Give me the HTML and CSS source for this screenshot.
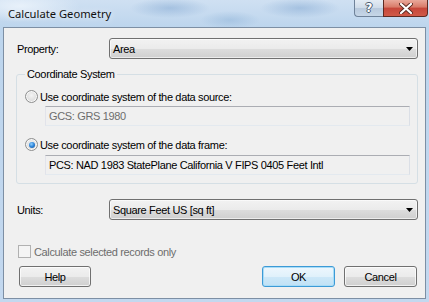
FILE: index.html
```html
<!DOCTYPE html>
<html>
<head>
<meta charset="utf-8">
<link rel="stylesheet" href="styles.css">
</head>
<body>
<div class="window">
  <div class="titlebar">
    <span class="title">Calculate Geometry</span>
    <div class="caption-btns">
      <div class="cap-help">?</div>
      <div class="cap-close">
        <svg width="14" height="11" viewBox="0 0 14 11">
          <path d="M2 1 L12 10 M12 1 L2 10" stroke="#5a2a22" stroke-width="4" stroke-linecap="round"/>
          <path d="M2 1 L12 10 M12 1 L2 10" stroke="#ffffff" stroke-width="2.2" stroke-linecap="round"/>
        </svg>
      </div>
    </div>
  </div>
  <div class="client">
    <div class="row">
      <span class="label">Property:</span>
      <div class="combo"><span class="combo-text">Area</span><svg class="arrow" width="7" height="4" viewBox="0 0 7 4"><path d="M0 0 H7 L3.5 4 Z" fill="#000"/></svg></div>
    </div>
    <fieldset class="group">
      <legend>Coordinate System</legend>
      <div class="opt"><span class="radio"></span><span>Use coordinate system of the data source:</span></div>
      <div class="textbox disabled">GCS: GRS 1980</div>
      <div class="opt opt2"><span class="radio checked"><span class="dot"></span></span><span>Use coordinate system of the data frame:</span></div>
      <div class="textbox tb2">PCS: NAD 1983 StatePlane California V FIPS 0405 Feet Intl</div>
    </fieldset>
    <div class="row units">
      <span class="label">Units:</span>
      <div class="combo"><span class="combo-text">Square Feet US [sq ft]</span><svg class="arrow" width="7" height="4" viewBox="0 0 7 4"><path d="M0 0 H7 L3.5 4 Z" fill="#000"/></svg></div>
    </div>
    <div class="check-row"><span class="checkbox"></span><span class="check-label">Calculate selected records only</span></div>
    <div class="buttons">
      <div class="btn help">Help</div>
      <div class="btn default">OK</div>
      <div class="btn">Cancel</div>
    </div>
  </div>
</div>
</body>
</html>
```
FILE: styles.css
```css
html, body {
  margin: 0;
  padding: 0;
}
body {
  font-family: "Liberation Sans", Arial, sans-serif;
  font-size: 11px;
  letter-spacing: -0.35px;
  color: #000;
  background: #c3d8ee;
}
.window {
  width: 429px;
  height: 302px;
  box-sizing: border-box;
  padding: 0 3px 3px 3px;
  display: flex;
  flex-direction: column;
  overflow: hidden;
  background:
    radial-gradient(ellipse 40px 10px at 170px 8px, rgba(120,160,205,0.45), transparent),
    radial-gradient(ellipse 40px 10px at 300px 8px, rgba(120,160,205,0.45), transparent),
    radial-gradient(ellipse 30px 9px at 230px 20px, rgba(130,170,210,0.4), transparent),
    radial-gradient(ellipse 60px 16px at 20px 6px, rgba(235,243,251,0.9), transparent),
    linear-gradient(to bottom, #cfe0f2 0px, #bdd5ed 27px, #c3d8ef 100%);
}
.titlebar {
  height: 27px;
  display: flex;
  align-items: flex-start;
}
.title {
  margin-left: 5px;
  line-height: 27px;
  font-family: "Noto Sans", "Open Sans", sans-serif;
  font-size: 11.2px;
  letter-spacing: 0;
  color: #111;
  text-shadow: 0 0 6px rgba(255,255,255,0.9);
}
.caption-btns {
  margin-left: auto;
  margin-right: -2px;
  display: flex;
  height: 17px;
  letter-spacing: 0;
}
.cap-help {
  width: 29px;
  height: 17px;
  box-sizing: border-box;
  border: 1px solid #6f8299;
  border-top: none;
  border-right: none;
  border-bottom-left-radius: 4px;
  background: linear-gradient(to bottom, #e4ecf4 0%, #cfdbe8 50%, #b8c9dc 51%, #c6d6e7 100%);
  color: #fff;
  font-family: "DejaVu Sans", sans-serif;
  font-weight: bold;
  font-size: 12px;
  line-height: 16px;
  text-align: center;
  text-shadow: 1px 0 0 #4a5a6e, -1px 0 0 #4a5a6e, 0 1px 0 #4a5a6e, 0 -1px 0 #4a5a6e;
}
.cap-close {
  width: 45px;
  height: 17px;
  box-sizing: border-box;
  border: 1px solid #5e2a22;
  border-top: none;
  border-bottom-right-radius: 4px;
  background: linear-gradient(to bottom, #e9a99b 0%, #d87a68 45%, #c6463a 50%, #d05a48 100%);
  display: flex;
  align-items: center;
  justify-content: center;
}
.client {
  flex: 1;
  background: #f0f0f0;
  border: 1px solid #7d8fa4;
  padding: 10px 7px 11px 13px;
  display: flex;
  flex-direction: column;
}
.row {
  display: flex;
  align-items: center;
  height: 21px;
}
.label {
  width: 92px;
  flex: none;
}
.combo {
  flex: 1;
  height: 21px;
  box-sizing: border-box;
  border: 1px solid #707070;
  border-radius: 3px;
  background: linear-gradient(to bottom, #f2f2f2 0%, #ebebeb 50%, #dddddd 51%, #cfcfcf 100%);
  box-shadow: inset 0 0 0 1px rgba(255,255,255,0.6);
  display: flex;
  align-items: center;
  padding: 0 4px 0 3px;
}
.combo-text {
  flex: 1;
}
.arrow {
  flex: none;
}
.group {
  margin: 9px 0 0 -1px;
  padding: 9px 7px 8px 8px;
  border: 1px solid #d5dfe5;
  border-radius: 3px;
  min-width: 0;
}
.group legend {
  padding: 0 2px;
  line-height: 13px;
}
.opt {
  display: flex;
  align-items: center;
  height: 13px;
  gap: 2px;
}
.opt2 {
  margin-top: 12px;
}
.radio {
  width: 13px;
  height: 13px;
  box-sizing: border-box;
  border-radius: 50%;
  border: 1px solid #8e8f8f;
  background: radial-gradient(circle at 50% 40%, #f4f4f4 0%, #e0e0e0 55%, #cfcfcf 100%);
  box-shadow: inset 0 0 0 1px #f8f8f8;
  flex: none;
  display: flex;
  align-items: center;
  justify-content: center;
}
.dot {
  width: 6px;
  height: 6px;
  border-radius: 50%;
  background: radial-gradient(circle at 40% 35%, #8fd0ff 0%, #2a82d8 50%, #1a4f8f 100%);
}
.textbox {
  margin: 3px 0 0 20px;
  height: 20px;
  box-sizing: border-box;
  border-top: 1px solid #abadb3;
  border-left: 1px solid #e2e3ea;
  border-right: 1px solid #dbdfe6;
  border-bottom: 1px solid #e3e9ef;
  padding: 0 3px;
  display: flex;
  align-items: center;
  white-space: nowrap;
  overflow: hidden;
}
.tb2 {
  margin-top: 4px;
}
.disabled {
  color: #6d6d6d;
}
.units {
  margin-top: 15px;
}
.check-row {
  margin-top: 25px;
  height: 13px;
  display: flex;
  align-items: center;
  gap: 3px;
  padding-left: 1px;
}
.checkbox {
  width: 13px;
  height: 13px;
  box-sizing: border-box;
  border: 1px solid #b1b1b1;
  background: #f4f4f4;
  flex: none;
}
.check-label {
  color: #6d6d6d;
}
.buttons {
  margin-top: 8px;
  display: flex;
  gap: 9px;
  padding: 0 1px 0 2px;
}
.btn {
  width: 73px;
  height: 21px;
  box-sizing: border-box;
  border: 1px solid #707070;
  border-radius: 3px;
  background: linear-gradient(to bottom, #f2f2f2 0%, #ebebeb 50%, #dddddd 51%, #cfcfcf 100%);
  box-shadow: inset 0 0 0 1px rgba(255,255,255,0.7);
  display: flex;
  align-items: center;
  justify-content: center;
}
.help {
  width: 72px;
  margin-right: auto;
}
.default {
  border-color: #3c9ad6;
  background: linear-gradient(to bottom, #eef7fd 0%, #e0f1fb 50%, #cde8f8 51%, #c0e1f5 100%);
  box-shadow: inset 0 0 0 1px #a8dcf7;
}
```
